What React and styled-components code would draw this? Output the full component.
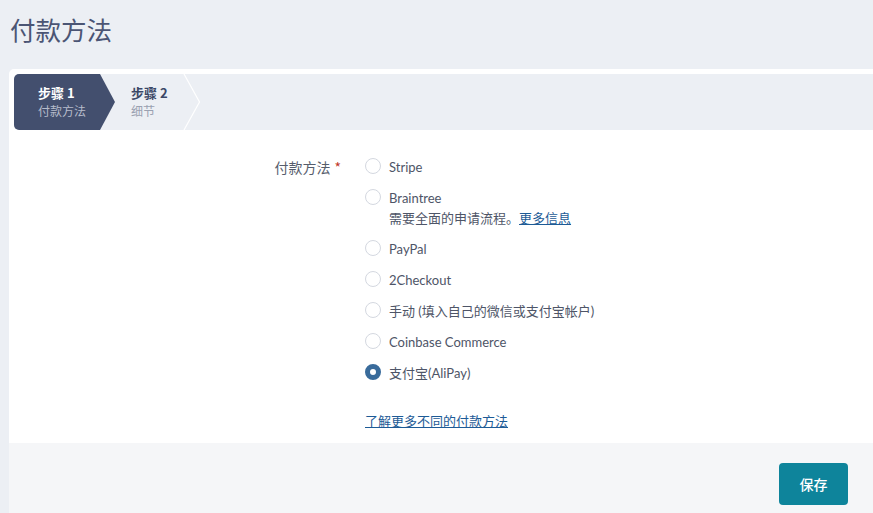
import React from "react";
import styled, { createGlobalStyle } from "styled-components";

const Global = createGlobalStyle`
  html, body { margin: 0; padding: 0; }
  body {
    background: #eceff4;
    font-family: "Lato", "Noto Sans CJK SC", sans-serif;
    overflow: hidden;
  }
`;

const Page = styled.div`
  width: 873px;
  height: 513px;
  display: flex;
  flex-direction: column;
  padding-left: 9px;
  box-sizing: border-box;
  overflow: hidden;
`;

const Title = styled.h1`
  margin: 0;
  height: 69px;
  padding: 11px 0 0 1px;
  box-sizing: border-box;
  font-family: "Noto Sans CJK SC", sans-serif;
  font-size: 25.5px;
  font-weight: 400;
  line-height: 36px;
  color: #4b5574;
`;

const Card = styled.div`
  flex: 1;
  background: #fff;
  border-top-left-radius: 5px;
  display: flex;
  flex-direction: column;
`;

const Stepper = styled.div`
  margin: 5px 0 0 5px;
  height: 56px;
  background: #eceff4;
  border-radius: 5px 0 0 5px;
  display: flex;
  align-items: stretch;
`;

const Step = styled.div`
  position: relative;
  width: ${(p) => p.$w}px;
  padding-left: ${(p) => p.$pl}px;
  box-sizing: border-box;
  display: flex;
  flex-direction: column;
  justify-content: center;
  background: ${(p) => (p.$active ? "#434f6e" : "transparent")};
  border-radius: ${(p) => (p.$active ? "5px 0 0 5px" : "0")};
  clip-path: ${(p) =>
    p.$active
      ? "polygon(0 0, calc(100% - 15px) 0, 100% 50%, calc(100% - 15px) 100%, 0 100%)"
      : "none"};
`;

const StepTitle = styled.div`
  font-family: "Noto Sans CJK SC", sans-serif;
  font-size: 13px;
  font-weight: 700;
  line-height: 18px;
  color: ${(p) => (p.$active ? "#ffffff" : "#3b4766")};
`;

const StepSub = styled.div`
  font-family: "Noto Sans CJK SC", sans-serif;
  font-size: 12px;
  line-height: 18px;
  color: ${(p) => (p.$active ? "#b6bccb" : "#9aa1b1")};
`;

const Chevron = styled.svg`
  position: absolute;
  right: 0;
  top: 0;
`;

const Form = styled.div`
  padding: 27px 0 12px;
  display: grid;
  grid-template-columns: 332px 1fr;
  column-gap: 24px;
`;

const Label = styled.div`
  text-align: right;
  font-family: "Noto Sans CJK SC", sans-serif;
  font-size: 14px;
  line-height: 20px;
  color: #565d6c;
`;

const Req = styled.span`
  color: #c0392b;
  margin-left: 4px;
`;

const Options = styled.div`
  display: flex;
  flex-direction: column;
  gap: 11px;
`;

const Option = styled.label`
  display: flex;
  align-items: flex-start;
  gap: 8px;
`;

const Radio = styled.span`
  flex: none;
  width: 16px;
  height: 16px;
  margin-top: 1px;
  border-radius: 50%;
  box-sizing: border-box;
  background: #fff;
  border: ${(p) => (p.$checked ? "5px solid #396b9b" : "1px solid #d4d8e0")};
`;

const OptText = styled.div`
  font-size: 13px;
  line-height: 20px;
  color: #4e5567;
`;

const Link = styled.a`
  color: #1d5b96;
  text-decoration: underline;
  cursor: pointer;
`;

const More = styled.div`
  margin-top: 28px;
  font-size: 13px;
  line-height: 20px;
`;

const Footer = styled.div`
  flex: 1;
  background: #f5f6f8;
  display: flex;
  justify-content: flex-end;
  align-items: flex-start;
  padding: 20px 25px 0 0;
`;

const Button = styled.button`
  width: 69px;
  height: 42px;
  border: none;
  border-radius: 4px;
  background: #0e849b;
  color: #fff;
  font-family: "Noto Sans CJK SC", sans-serif;
  font-size: 14px;
  font-weight: 500;
  cursor: pointer;
`;

const options = [
  "Stripe",
  "Braintree",
  "PayPal",
  "2Checkout",
  "手动 (填入自己的微信或支付宝帐户)",
  "Coinbase Commerce",
  "支付宝(AliPay)",
];

export default function App() {
  return (
    <>
      <Global />
      <Page>
        <Title>付款方法</Title>
        <Card>
          <Stepper>
            <Step $active $w={101} $pl={24}>
              <StepTitle $active>步骤 1</StepTitle>
              <StepSub $active>付款方法</StepSub>
            </Step>
            <Step $w={86} $pl={16}>
              <StepTitle>步骤 2</StepTitle>
              <StepSub>细节</StepSub>
              <Chevron width="18" height="56" viewBox="0 0 18 56">
                <polyline
                  points="1,0 16.5,28 1,56"
                  fill="none"
                  stroke="#ffffff"
                  strokeWidth="1.2"
                />
              </Chevron>
            </Step>
          </Stepper>
          <Form>
            <Label>
              付款方法<Req>*</Req>
            </Label>
            <div>
              <Options>
                {options.map((o, i) => (
                  <Option key={o}>
                    <Radio $checked={i === 6} />
                    <OptText>
                      {o}
                      {i === 1 && (
                        <div>
                          需要全面的申请流程。<Link>更多信息</Link>
                        </div>
                      )}
                    </OptText>
                  </Option>
                ))}
              </Options>
              <More>
                <Link>了解更多不同的付款方法</Link>
              </More>
            </div>
          </Form>
          <Footer>
            <Button>保存</Button>
          </Footer>
        </Card>
      </Page>
    </>
  );
}
